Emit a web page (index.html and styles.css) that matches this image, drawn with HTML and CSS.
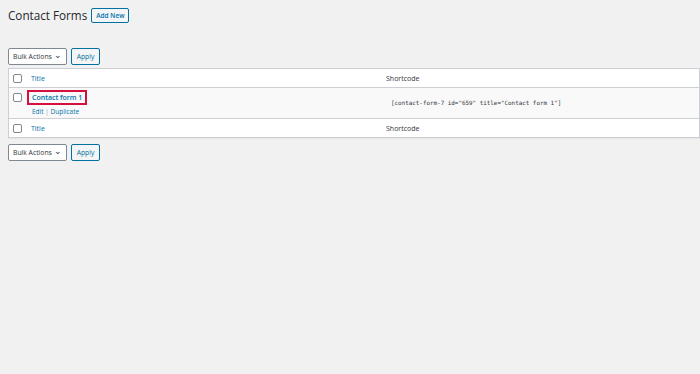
FILE: index.html
```html
<!DOCTYPE html>
<html lang="en">
<head>
  <meta charset="UTF-8">
  <title>Contact Forms</title>
  <link rel="stylesheet" href="styles.css">
</head>
<body>
  <div class="wrap">
    <div class="page-head">
      <h1>Contact Forms</h1>
      <a class="add-new" href="#">Add New</a>
    </div>

    <div class="tablenav top">
      <div class="select">Bulk Actions <span class="chev">&#8964;</span></div>
      <button class="apply">Apply</button>
    </div>

    <table class="list">
      <thead>
        <tr>
          <td class="cb"><span class="box"></span></td>
          <th class="col-title"><a href="#">Title</a></th>
          <th class="col-short">Shortcode</th>
        </tr>
      </thead>
      <tbody>
        <tr class="alt">
          <td class="cb"><span class="box"></span></td>
          <td class="col-title">
            <a class="row-title" href="#">Contact form 1</a>
            <div class="row-actions"><a href="#">Edit</a> <span class="sep">|</span> <a href="#">Duplicate</a></div>
          </td>
          <td class="col-short"><code>[contact-form-7 id="659" title="Contact form 1"]</code></td>
        </tr>
      </tbody>
      <tfoot>
        <tr>
          <td class="cb"><span class="box"></span></td>
          <th class="col-title"><a href="#">Title</a></th>
          <th class="col-short">Shortcode</th>
        </tr>
      </tfoot>
    </table>

    <div class="tablenav bottom">
      <div class="select">Bulk Actions <span class="chev">&#8964;</span></div>
      <button class="apply">Apply</button>
    </div>
  </div>
</body>
</html>
```

FILE: styles.css
```css
body, h1, table, button { margin: 0; padding: 0; box-sizing: border-box; }

body {
  background: #f1f1f1;
  font-family: "Open Sans", "Noto Sans", Arial, sans-serif;
  font-size: 7px;
  color: #3c434a;
}

a { color: #0073aa; text-decoration: none; }

.wrap {
  padding: 7px 0 0 8px;
}

.page-head {
  display: flex;
  align-items: center;
  gap: 4px;
  height: 16px;
}

.page-head h1 {
  font-size: 11.7px;
  font-weight: 400;
  color: #23282d;
}

.add-new {
  border: 1px solid #0071a1;
  border-radius: 2px;
  padding: 2px 4px;
  font-size: 6.5px;
  font-weight: 600;
  background: #f3f5f6;
  line-height: 9px;
}

.tablenav {
  display: flex;
  gap: 4px;
  height: 17px;
}

.tablenav.top { margin-top: 25px; }
.tablenav.bottom { margin-top: 6px; }

.select {
  width: 59px;
  border: 1px solid #7e8993;
  border-radius: 2px;
  background: #fff;
  padding: 0 4px;
  display: flex;
  align-items: center;
  justify-content: space-between;
  font-size: 6.8px;
  white-space: nowrap;
  color: #32373c;
  box-sizing: border-box;
}

.chev {
  font-size: 9px;
  line-height: 1;
  margin-top: -5px;
}

.apply {
  width: 29px;
  border: 1px solid #0071a1;
  border-radius: 2px;
  background: #f3f5f6;
  color: #0071a1;
  font-family: inherit;
  font-size: 6.8px;
}

.list {
  margin-top: 3px;
  width: 692px;
  border-collapse: collapse;
  background: #fff;
  border: 1px solid #ccd0d4;
  box-shadow: 0 1px 1px rgba(0,0,0,0.04);
}

.list th, .list td {
  text-align: left;
  font-weight: 400;
  vertical-align: top;
  padding: 0;
}

.list thead tr, .list tfoot tr { height: 19px; }
.list thead th, .list thead td { border-bottom: 1px solid #ccd0d4; }
.list tfoot th, .list tfoot td { border-top: 1px solid #ccd0d4; }
.list thead th, .list tfoot th { vertical-align: middle; }

.list tr.alt { background: #f9f9f9; height: 31px; }

.cb { width: 14px; padding-left: 4px !important; }
.list thead .cb, .list tfoot .cb { vertical-align: middle; }
.list tbody .cb { padding-top: 5px !important; }

.box {
  display: block;
  width: 9px;
  height: 9px;
  border: 1px solid #7e8993;
  border-radius: 2px;
  background: #fff;
  box-sizing: border-box;
}

.col-title { width: 355px; }
.list thead .col-title, .list tfoot .col-title { padding-left: 4px !important; }
.list tbody .col-title { padding-top: 2px !important; }

.row-title {
  display: inline-block;
  font-weight: 600;
  font-size: 7px;
  border: 2px solid #d5103f;
  padding: 1px 3px 1px 3px;
  line-height: 9px;
}

.row-actions {
  padding-left: 5px;
  margin-top: 2px;
  font-size: 6.5px;
}

.sep { color: #a0a5aa; }

.col-short { color: #32373c; }

.list tbody .col-short { padding-top: 10px !important; padding-left: 5px !important; }

code {
  font-family: "DejaVu Sans Mono", "Liberation Mono", monospace;
  font-size: 5.9px;
  color: #32373c;
}
```
